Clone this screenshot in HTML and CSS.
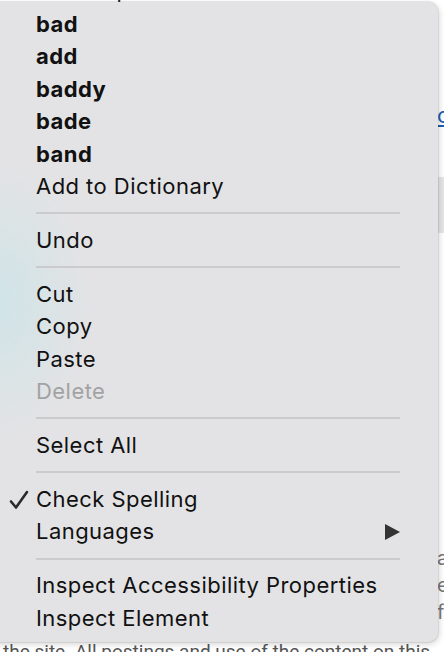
FILE: index.html
```html
<!DOCTYPE html>
<html>
<head>
<meta charset="utf-8">
<link rel="stylesheet" href="styles.css">
</head>
<body>
<div class="page">
  <div class="top-line">on in the input</div>
  <div class="side">
    <a class="link">c</a>
    <div class="band"></div>
    <div class="side-text">a<br>e<br>f</div>
  </div>
  <div class="bottom-line">the site. All postings and use of the content on this</div>
</div>

<div class="menu">
  <div class="item bold">bad</div>
  <div class="item bold">add</div>
  <div class="item bold">baddy</div>
  <div class="item bold">bade</div>
  <div class="item bold">band</div>
  <div class="item">Add to Dictionary</div>
  <div class="sep"></div>
  <div class="item">Undo</div>
  <div class="sep"></div>
  <div class="item">Cut</div>
  <div class="item">Copy</div>
  <div class="item">Paste</div>
  <div class="item disabled">Delete</div>
  <div class="sep"></div>
  <div class="item">Select All</div>
  <div class="sep"></div>
  <div class="item checked"><svg class="check" width="22" height="22" viewBox="0 0 22 22"><path d="M3 12.5 L8 18.5 L19 3" fill="none" stroke="#2a2a2a" stroke-width="2.6" stroke-linecap="round" stroke-linejoin="round"/></svg>Check Spelling</div>
  <div class="item sub">Languages<span class="arrow"></span></div>
  <div class="sep"></div>
  <div class="item">Inspect Accessibility Properties</div>
  <div class="item">Inspect Element</div>
</div>
</body>
</html>
```

FILE: styles.css
```css
html, body {
  margin: 0;
  padding: 0;
  background: #ffffff;
  width: 444px;
  height: 652px;
  overflow: hidden;
  font-family: "Inter", "Liberation Sans", sans-serif;
}

.page {
  position: relative;
  width: 444px;
  height: 652px;
  display: flex;
  flex-direction: column;
}

.top-line {
  margin-top: -19px;
  padding-left: 2px;
  font-size: 22px;
  line-height: 20px;
  color: #222;
}

.side {
  display: flex;
  flex-direction: column;
  padding-left: 437px;
  margin-top: 102px;
}

.link {
  color: #1a5fb4;
  font-size: 22px;
  line-height: 24px;
  text-decoration: underline;
}

.band {
  margin-top: 50px;
  height: 56px;
  background: #e6e6e6;
}

.side-text {
  margin-top: 312px;
  color: #777;
  font-size: 20px;
  line-height: 27px;
}

.bottom-line {
  margin-top: auto;
  padding-left: 3px;
  font-family: "Roboto", "Liberation Sans", sans-serif;
  font-size: 19px;
  line-height: 19px;
  height: 10px;
  color: #555;
  white-space: nowrap;
}

.menu {
  position: absolute;
  left: -12px;
  top: 2px;
  width: 450px;
  box-sizing: border-box;
  padding: 6px 0 8px;
  border-radius: 10px;
  background:
    radial-gradient(ellipse 90px 140px at 12px 300px, rgba(200, 228, 232, 0.7), rgba(200, 228, 232, 0)),
    #e3e3e5;
  box-shadow: 0 0 0 1px rgba(0, 0, 0, 0.07), 1px 2px 6px rgba(0, 0, 0, 0.18);
}

.item {
  position: relative;
  height: 32.4px;
  line-height: 32.4px;
  padding-left: 48px;
  font-size: 22px;
  letter-spacing: 0.45px;
  color: #111;
  white-space: nowrap;
}

.bold {
  font-weight: 700;
}

.disabled {
  color: #a2a2a4;
}

.check {
  position: absolute;
  left: 20px;
  top: 6px;
}

.arrow {
  position: absolute;
  left: 397px;
  top: 9px;
  width: 0;
  height: 0;
  border-top: 8px solid transparent;
  border-bottom: 8px solid transparent;
  border-left: 15px solid #333;
}

.sep {
  height: 21.6px;
  display: flex;
  align-items: center;
  padding-left: 48px;
  padding-right: 38px;
}

.sep::after {
  content: "";
  flex: 1;
  height: 2px;
  background: #cbcbcd;
}
```
